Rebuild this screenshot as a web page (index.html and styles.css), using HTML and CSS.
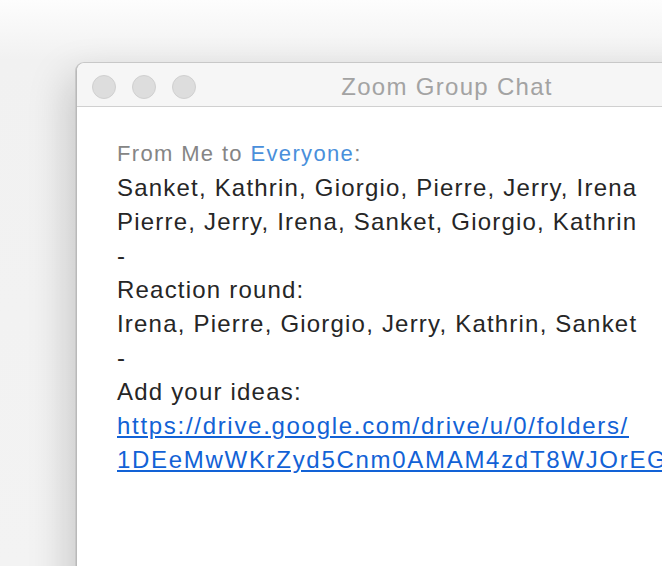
FILE: index.html
```html
<!DOCTYPE html>
<html lang="en">
<head>
  <meta charset="UTF-8">
  <title>Zoom Group Chat</title>
  <link rel="stylesheet" href="styles.css">
</head>
<body>
  <div class="desktop">
    <div class="window">
      <div class="titlebar">
        <div class="lights">
          <span class="light"></span>
          <span class="light"></span>
          <span class="light"></span>
        </div>
        <div class="title">Zoom Group Chat</div>
      </div>

      <div class="chat">
        <div class="sender">From Me to <span class="to">Everyone</span>:</div>
        <div class="message">
          <div>Sanket, Kathrin, Giorgio, Pierre, Jerry, Irena</div>
          <div>Pierre, Jerry, Irena, Sanket, Giorgio, Kathrin</div>
          <div>-</div>
          <div>Reaction round:</div>
          <div>Irena, Pierre, Giorgio, Jerry, Kathrin, Sanket</div>
          <div>-</div>
          <div>Add your ideas:</div>
          <a class="link" href="#">https://drive.google.com/drive/u/0/folders/<br>1DEeMwWKrZyd5Cnm0AMAM4zdT8WJOrEGc</a>
        </div>
      </div>
    </div>
  </div>
</body>
</html>
```

FILE: styles.css
```css
html, body {
  margin: 0;
  padding: 0;
  overflow: hidden;
}

body {
  font-family: "Liberation Sans", Arial, sans-serif;
  background: linear-gradient(to bottom, #fdfdfd 0, #f1f1f1 60px, #f3f3f3 100%);
  width: 662px;
  height: 566px;
}

.desktop {
  padding: 63px 0 0 76px;
  height: 503px;
  overflow: hidden;
}

.window {
  width: 740px;
  height: 560px;
  background: #fff;
  border-radius: 8px 8px 0 0;
  border-left: 1px solid #b9b9b9;
  box-shadow: 0 0 0 1px #c8c8c8, -8px 14px 40px rgba(0, 0, 0, 0.18);
}

.titlebar {
  height: 43px;
  background: #f6f6f6;
  border-bottom: 1px solid #d0d0d0;
  border-radius: 8px 8px 0 0;
  position: relative;
  display: flex;
  align-items: center;
  justify-content: center;
}

.lights {
  position: absolute;
  left: 15px;
  top: 12px;
  display: flex;
  gap: 16px;
}

.light {
  width: 22px;
  height: 22px;
  border-radius: 50%;
  background: #dddddd;
  border: 1px solid #d0d0d0;
}

.title {
  font-size: 24px;
  color: #a3a3a3;
  letter-spacing: 1.3px;
  padding-top: 4px;
}

.chat {
  padding: 30px 0 0 40px;
  font-size: 24px;
  line-height: 34px;
  letter-spacing: 1.2px;
}

.sender {
  color: #858585;
  font-size: 22px;
  letter-spacing: 1.35px;
}

.to {
  color: #4a8fdb;
}

.message {
  color: #262626;
}

.link {
  color: #1262d6;
  text-decoration: underline;
  white-space: nowrap;
  letter-spacing: 1.7px;
}
```
